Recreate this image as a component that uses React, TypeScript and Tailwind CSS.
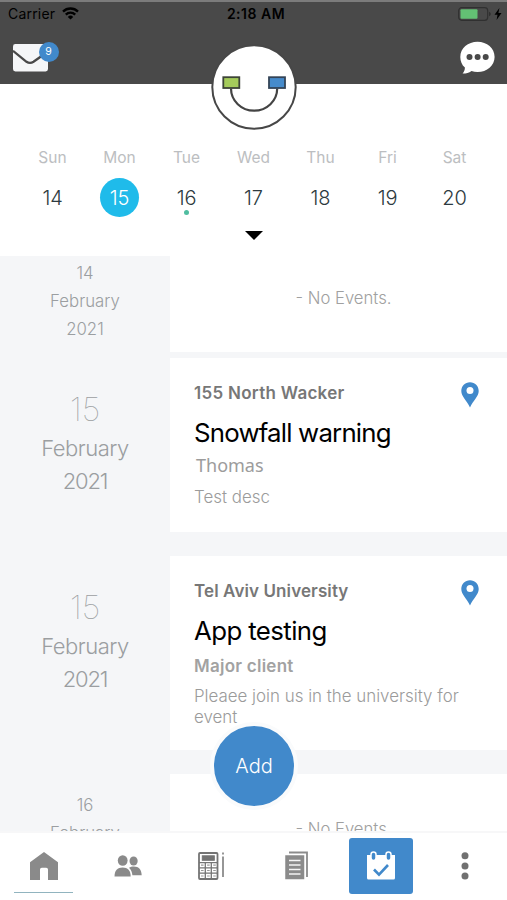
import React from 'react';

const WEEK = [
  { name: 'Sun', day: 14 },
  { name: 'Mon', day: 15, selected: true },
  { name: 'Tue', day: 16, marked: true },
  { name: 'Wed', day: 17 },
  { name: 'Thu', day: 18 },
  { name: 'Fri', day: 19 },
  { name: 'Sat', day: 20 },
];

function StatusBar() {
  return (
    <div className="flex h-[23px] items-center justify-between pl-2 pr-[5px] text-black">
      <div className="flex w-[119px] items-center gap-[7px] text-[14px] tracking-[0.2px]">
        <span>Carrier</span>
        <svg width="17" height="13" viewBox="0 0 17 13" fill="none" stroke="currentColor" strokeWidth="2.3">
          <path d="M1 4.6a10.6 10.6 0 0 1 15 0" />
          <path d="M3.8 7.6a6.6 6.6 0 0 1 9.4 0" />
          <path d="M8.5 12.6 5.8 9.9a3.8 3.8 0 0 1 5.4 0z" fill="currentColor" stroke="none" />
        </svg>
      </div>
      <span className="ml-[2px] text-[14px] font-semibold tracking-[0.5px]">2:18 AM</span>
      <div className="flex w-[119px] items-center justify-end gap-[2px]">
        <svg width="34" height="14" viewBox="0 0 34 14">
          <rect x="0.7" y="0.7" width="29" height="12.6" rx="3" fill="none" stroke="#303030" strokeWidth="1.2" />
          <rect x="2.5" y="2.3" width="17" height="9.4" rx="1" fill="#63c174" />
          <path d="M31 4.8c2.4.8 2.4 3.6 0 4.4z" fill="#303030" />
        </svg>
        <svg width="8" height="12" viewBox="0 0 8 12" fill="currentColor">
          <path d="M5.4 0 .5 6.7h3L2.6 12l4.9-7.1H4.4z" />
        </svg>
      </div>
    </div>
  );
}

function Logo() {
  return (
    <svg width="86" height="86" viewBox="0 0 86 86" className="absolute left-[211px] top-[42px] z-10">
      <circle cx="43" cy="43" r="41.7" fill="#fff" stroke="#474747" strokeWidth="2" />
      <path d="M20 44.5a23.1 22.2 0 0 0 46.2 0" fill="none" stroke="#444" strokeWidth="2.2" />
      <rect x="12.3" y="33.2" width="16" height="10.8" fill="#a5cc5b" stroke="#3d4438" strokeWidth="1.8" />
      <rect x="58" y="33.2" width="16" height="10.8" fill="#468bcb" stroke="#344457" strokeWidth="1.8" />
    </svg>
  );
}

function Header() {
  return (
    <header className="relative h-[84px] border-t-2 border-[#7c7c7c] bg-[#494949]">
      <StatusBar />
      <div className="flex items-start justify-between pl-[13px] pr-3 pt-[16px]">
        <div className="relative pt-[3px]">
          <svg width="35" height="28" viewBox="0 0 35 28">
            <rect width="35" height="27.5" rx="2.4" fill="#f5f6f8" />
            <path d="M0 6.8 13.5 17.8q3.5 2.3 7 0L35 7.5" fill="none" stroke="#494949" strokeWidth="2.3" />
          </svg>
          <span className="absolute left-[25.5px] top-[0.5px] flex h-[20px] w-[20px] items-center justify-center rounded-full bg-[#4189cb] text-[10.5px] text-white">9</span>
        </div>
        <svg width="35" height="33" viewBox="0 0 35 33">
          <path d="M17.5.8C27 .8 34.6 7.3 34.6 15.9S27 31 17.5 31c-2.1 0-4.2-.4-6-1.1C8.8 31.9 5.9 32.7 2.6 32.6c1.5-1.6 2.3-3.6 2.3-6C1.8 23.8.3 20 .3 15.900.3 7.3 8 .8 17.5.8z" fill="#fff" />
          <circle cx="9.5" cy="16" r="3" fill="#494949" />
          <circle cx="17.6" cy="16" r="3" fill="#494949" />
          <circle cx="25.7" cy="16" r="3" fill="#494949" />
        </svg>
      </div>
      <Logo />
    </header>
  );
}

function WeekStrip() {
  return (
    <section className="h-[172px] bg-white px-[19px] pt-[64px]">
      <div className="grid grid-cols-7">
        {WEEK.map((d) => (
          <div key={d.name} className="flex flex-col items-center">
            <span className="text-[15.5px] leading-[20px] text-[#bcbec1]">{d.name}</span>
            <div
              className={`relative mt-[10px] flex h-[39px] w-[39px] items-center justify-center rounded-full text-[20px] font-light tracking-[-0.1px] ${
                d.selected ? 'bg-[#1fbbea] text-white' : 'text-[#2d3a40]'
              }`}
            >
              {d.day}
              {d.marked && <span className="absolute bottom-[2px] h-[5px] w-[5px] rounded-full bg-[#50bda0]" />}
            </div>
          </div>
        ))}
      </div>
      <svg width="18" height="9" viewBox="0 0 18 9" className="mx-auto mt-[14px]">
        <path d="M0 0h18L9 9z" />
      </svg>
    </section>
  );
}

function SmallDate({ day }: { day: number }) {
  return (
    <div className="w-[170px] shrink-0 pt-[3px] text-center text-[16.8px] font-light leading-[28px] text-[#9b9ea1]">
      <p>{day}</p>
      <p>February</p>
      <p>2021</p>
    </div>
  );
}

function BigDate({ day }: { day: number }) {
  return (
    <div className="w-[170px] shrink-0 pt-[29px] text-center text-[22px] font-light leading-[33px] text-[#9b9ea1]">
      <p className="text-[33px] font-thin leading-[44px]">{day}</p>
      <p className="mt-[1px] tracking-[-0.5px]">February</p>
      <p className="tracking-[-1.2px]">2021</p>
    </div>
  );
}

function Pin() {
  return (
    <svg width="18" height="26" viewBox="0 0 18 26" className="absolute right-[28px] top-[23.5px]">
      <path d="M9 .3C4 .3.3 4.100.3 9c0 5.4 5.6 9.7 8.7 16.5C12.1 18.7 17.7 14.4 17.7 9 17.7 4.1 14 .3 9 .3z" fill="#4189cb" />
      <circle cx="9" cy="8.5" r="3.5" fill="#fff" />
    </svg>
  );
}

function EventList() {
  return (
    <main className="h-[575px] overflow-hidden bg-[#f5f6f8]">
      <div className="flex h-[96px]">
        <SmallDate day={14} />
        <div className="flex flex-1 justify-center bg-white pl-[10px] pt-[30px] text-[16.7px] font-light leading-[24px] text-[#a0a0a0]">- No Events.</div>
      </div>

      <div className="mt-[6px] flex h-[174px]">
        <BigDate day={15} />
        <article className="relative flex-1 bg-white pl-[24px] pt-[24px]">
          <Pin />
          <p className="text-[17px] font-semibold leading-[22px] tracking-[0.28px] text-[#777]">155 North Wacker</p>
          <h2 className="mt-[11px] text-[25.8px] leading-[36px] tracking-[-0.8px] text-black">Snowfall warning</h2>
          <p className="ml-[2px] mt-[3px] font-['Noto_Sans'] text-[18px] leading-[22px] text-[#9c9c9c]">Thomas</p>
          <p className="mt-[11px] text-[16.9px] font-light leading-[21px] text-[#9b9b9b]">Test desc</p>
        </article>
      </div>

      <div className="mt-[24px] flex h-[194px]">
        <BigDate day={15} />
        <article className="relative flex-1 bg-white pl-[24px] pt-[24px]">
          <Pin />
          <p className="text-[17px] font-semibold leading-[22px] tracking-[0.1px] text-[#777]">Tel Aviv University</p>
          <h2 className="mt-[11px] text-[25.8px] leading-[36px] tracking-[-0.6px] text-black">App testing</h2>
          <p className="mt-[6px] text-[17px] font-semibold leading-[22px] tracking-[0.25px] text-[#a2a2a2]">Major client</p>
          <p className="mt-[9px] w-[280px] text-[16.9px] font-light leading-[21px] text-[#9b9b9b]">
            Pleaee join us in the university for event
          </p>
        </article>
      </div>

      <div className="mt-[24px] flex h-[96px]">
        <div className="mt-[14px]">
          <SmallDate day={16} />
        </div>
        <div className="flex flex-1 justify-center bg-white pl-[10px] pt-[43px] text-[16.7px] font-light leading-[24px] text-[#a0a0a0]">- No Events.</div>
      </div>
    </main>
  );
}

function TabBar() {
  return (
    <nav className="flex h-[69px] items-start border-t-2 border-[#f7f7f8] bg-white pl-[14px] text-[#8a8a8a]">
      <div className="flex h-[60px] w-[59px] justify-center border-b border-[#91b4bf] pt-[19px]">
        <svg width="28" height="28" viewBox="0 0 28 28" fill="currentColor">
          <path d="M14 0 28 10.2V28H18V17.5q0-1.8-1.8-1.8h-4.4q-1.8 0-1.8 1.8V28H0V10.2z" />
        </svg>
      </div>

      <svg width="28" height="22" viewBox="0 0 28 22" fill="currentColor" className="ml-[41px] mt-[22px]">
        <ellipse cx="8.7" cy="5.5" rx="4.9" ry="5.3" />
        <path d="M.5 21.5C.5 15.5 3.5 12.5 8.6 12.5s8.1 3 8.1 9z" />
        <ellipse cx="19.6" cy="6" rx="4.1" ry="4.6" />
        <path d="M15 12.7c1.4-.9 3-1.2 4.9-1.2 5 0 7.6 3 7.8 8.8h-9.3c-.3-3.4-1.4-5.8-3.4-7.6z" />
      </svg>

      <svg width="28" height="28" viewBox="0 0 28 28" fill="none" stroke="#747474" className="ml-[56px] mt-[19px]">
        <rect x="1" y="1" width="18.5" height="26" rx="1" strokeWidth="1.8" />
        <rect x="4.3" y="3.8" width="12" height="4.5" fill="#747474" strokeWidth="1" />
        <path d="M1 10.7h18.5M1 15.9h18.5M1 21.2h18.5M7.3 10.7V27M13.3 10.7V27" strokeWidth="1.3" />
        <path d="M3 13.2h2.6M9.1 13.2h2.6M15.2 13.2h2.6M3 18.5h2.6M9.1 18.5h2.6M15.2 18.5h2.6M3 24h2.6M9.1 24h2.6M15.2 24h2.6" stroke="#999" strokeWidth="1.2" />
        <path d="M25 4.5V25M25 .5v2" strokeWidth="1.5" />
      </svg>

      <svg width="24" height="29" viewBox="0 0 24 29" fill="none" stroke="#8b8b8b" className="ml-[59px] mt-[18px]">
        <path d="M4 1.5h18V26" strokeWidth="1.8" />
        <path d="M1 5h17.5v22.5H1z" fill="#8b8b8b" strokeWidth="1.5" />
        <path d="M4 9.5h11.5M4 14h11.5M4 18.5h11.5M4 23h11.5" stroke="#f4f4f4" strokeWidth="1.5" />
      </svg>

      <div className="ml-[40px] mt-[5px] flex h-[56px] w-[64px] justify-center rounded-[3px] bg-[#4189cb] pt-[13px]">
        <svg width="28" height="30" viewBox="0 0 28 30">
          <path d="M0 4h28v23q0 1.5-1.5 1.5h-25Q0 28.5 0 27z" fill="#fff" />
          <rect x="4" y="1" width="5" height="8.5" rx="2.5" fill="#4189cb" stroke="#fff" strokeWidth="1.5" />
          <rect x="19" y="1" width="5" height="8.5" rx="2.5" fill="#4189cb" stroke="#fff" strokeWidth="1.5" />
          <path d="m7 18.5 5 5.2 9-9.7" fill="none" stroke="#4189cb" strokeWidth="2.6" />
        </svg>
      </div>

      <svg width="8" height="28" viewBox="0 0 8 28" fill="#717171" className="ml-[48px] mt-[19px]">
        <circle cx="4" cy="3.8" r="3.5" />
        <circle cx="4" cy="14" r="3.5" />
        <circle cx="4" cy="24" r="3.5" />
      </svg>
    </nav>
  );
}

export default function App() {
  return (
    <div className="relative h-[900px] w-[507px] overflow-hidden bg-white font-['Inter',sans-serif]">
      <Header />
      <WeekStrip />
      <EventList />
      <TabBar />
      <button className="absolute left-[210px] top-[722px] flex h-[88px] w-[88px] items-center justify-center rounded-full border-4 border-[#fafbfc] bg-[#4189cb] text-[20px] font-light text-white">
        Add
      </button>
    </div>
  );
}
